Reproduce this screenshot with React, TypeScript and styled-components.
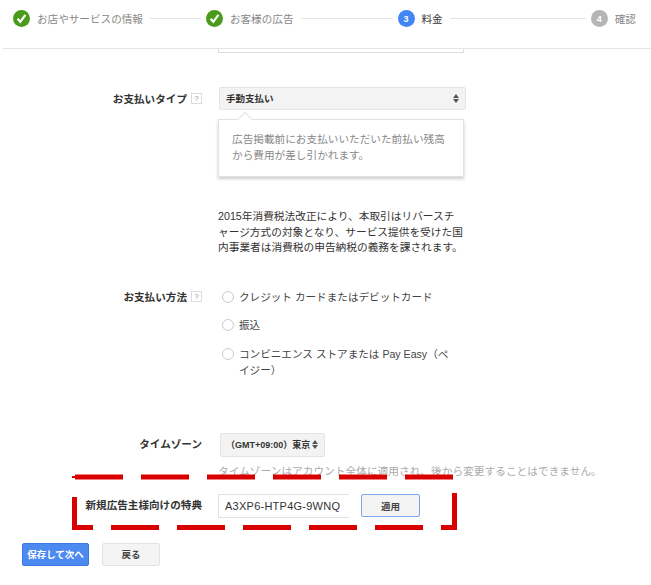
import { createGlobalStyle, styled } from 'styled-components'

const steps = [
  { label: 'お店やサービスの情報', state: 'done', line: 51 },
  { label: 'お客様の広告', state: 'done', line: 92 },
  { label: '料金', state: 'active', line: 136, num: 3 },
  { label: '確認', state: 'todo', line: 0, num: 4 },
]

const payments = ['クレジット カードまたはデビットカード', '振込', 'コンビニエンス ストアまたは Pay Easy（ペイジー）']

const GlobalStyle = createGlobalStyle`
  html, body {
    margin: 0;
    background: #fff;
    overflow: hidden;
  }

  body {
    font-family: "Liberation Sans", "Noto Sans CJK JP", sans-serif;
    color: #333;
  }
`

function App() {
  return (
    <Page>
      <GlobalStyle />
      <Header>
        {steps.map((step) => (
          <Step key={step.label}>
            <StepCircle $state={step.state}>
              {step.state === 'done' ? (
                <svg width="11" height="11" viewBox="0 0 11 11">
                  <path d="M1.6 5.8 4.3 8.8 9.4 1.8" fill="none" stroke="#fff" strokeWidth="2.2" />
                </svg>
              ) : (
                step.num
              )}
            </StepCircle>
            <StepLabel $active={step.state === 'active'}>{step.label}</StepLabel>
            {step.line > 0 && <StepLine $width={step.line} />}
          </Step>
        ))}
      </Header>

      <CutOffBox />

      <TypeRow>
        <Label>
          お支払いタイプ
          <Help>?</Help>
        </Label>
        <div>
          <Select>
            手動支払い
            <Arrows />
          </Select>
          <Bubble>広告掲載前にお支払いいただいた前払い残高から費用が差し引かれます。</Bubble>
        </div>
      </TypeRow>

      <TaxNote>
        2015年消費税法改正により、本取引はリバースチャージ方式の対象となり、サービス提供を受けた国内事業者は消費税の申告納税の義務を課されます。
      </TaxNote>

      <MethodRow>
        <Label>
          お支払い方法
          <Help>?</Help>
        </Label>
        <RadioList>
          {payments.map((payment) => (
            <RadioItem key={payment}>
              <Radio />
              <span>{payment}</span>
            </RadioItem>
          ))}
        </RadioList>
      </MethodRow>

      <ZoneRow>
        <Label>タイムゾーン</Label>
        <div>
          <ZoneSelect>
            （GMT+09:00）東京
            <Arrows />
          </ZoneSelect>
          <Hint>タイムゾーンはアカウント全体に適用され、後から変更することはできません。</Hint>
        </div>
      </ZoneRow>

      <CouponRow>
        <Label>新規広告主様向けの特典</Label>
        <CouponControls>
          <CouponInput>A3XP6-HTP4G-9WNQ</CouponInput>
          <ApplyButton>適用</ApplyButton>
        </CouponControls>
      </CouponRow>

      <Actions>
        <SaveButton>保存して次へ</SaveButton>
        <BackButton>戻る</BackButton>
      </Actions>

      <Annotation width="651" height="585" viewBox="0 0 651 585">
        <path d="M72 477H75" stroke="#d90000" strokeWidth="2" />
        <path d="M75 477H453" stroke="#d90000" strokeWidth="5" strokeDasharray="48 18" />
        <path d="M74.5 497V527.500H93" fill="none" stroke="#d90000" strokeWidth="5" />
        <path d="M111 527.500H423" stroke="#d90000" strokeWidth="5" strokeDasharray="48 18" />
        <path d="M441 527.500H454.500V493" fill="none" stroke="#d90000" strokeWidth="5" />
      </Annotation>
    </Page>
  )
}

const Page = styled.div`
  position: relative;
  width: 651px;
  height: 585px;
  overflow: hidden;
  font-size: 11px;
`

const Header = styled.div`
  display: flex;
  align-items: center;
  box-sizing: border-box;
  height: 49px;
  margin-left: 3px;
  padding: 0 0 11px 10px;
  border-bottom: 1px solid #e5e5e5;
`

const Step = styled.div`
  display: flex;
  align-items: center;
`

const StepCircle = styled.div<{ $state: string }>`
  display: flex;
  align-items: center;
  justify-content: center;
  width: 17px;
  height: 17px;
  margin-right: 7px;
  border-radius: 50%;
  background: ${({ $state }) => ($state === 'done' ? '#4a9a1c' : $state === 'active' ? '#4285f4' : '#b5b5b5')};
  color: #fff;
  font-size: 9px;
  font-weight: bold;
`

const StepLabel = styled.span<{ $active: boolean }>`
  color: ${({ $active }) => ($active ? '#333' : '#888')};
  font-size: 10.600px;
  white-space: nowrap;
`

const StepLine = styled.div<{ $width: number }>`
  width: ${({ $width }) => $width}px;
  height: 1px;
  margin: 0 5px 0 7px;
  background: #e5e5e5;
`

const CutOffBox = styled.div`
  box-sizing: border-box;
  width: 246px;
  height: 4px;
  margin-left: 218px;
  border: 1px solid #ddd;
  border-top: 0;
`

const FormRow = styled.div`
  display: grid;
  grid-template-columns: 202px 1fr;
  column-gap: 16px;
`

const TypeRow = styled(FormRow)`
  margin-top: 34px;
`

const Label = styled.div`
  display: flex;
  align-items: center;
  justify-content: flex-end;
  box-sizing: border-box;
  height: 23px;
  padding-bottom: 1px;
  font-size: 10.600px;
  font-weight: bold;
  color: #333;
  white-space: nowrap;
`

const Help = styled.span`
  display: flex;
  align-items: center;
  justify-content: center;
  box-sizing: border-box;
  width: 11px;
  height: 11px;
  margin-left: 4px;
  border: 1px solid #ddd;
  color: #999;
  font-size: 8px;
  font-weight: normal;
`

const Select = styled.div`
  position: relative;
  display: flex;
  align-items: center;
  box-sizing: border-box;
  width: 247px;
  height: 23px;
  margin-left: 1px;
  padding: 0 0 1px 6px;
  border: 1px solid #e4e4e4;
  border-radius: 2px;
  background: #f3f3f3;
  color: #333;
  font-size: 9.500px;
  font-weight: bold;
`

const Arrows = styled.span`
  position: absolute;
  top: 50%;
  right: 5px;
  width: 7px;
  height: 9px;
  margin-top: -5px;

  &::before,
  &::after {
    content: '';
    position: absolute;
    left: 0;
    border-left: 3.500px solid transparent;
    border-right: 3.500px solid transparent;
  }

  &::before {
    top: 0;
    border-bottom: 4px solid #555;
  }

  &::after {
    bottom: 0;
    border-top: 4px solid #555;
  }
`

const Bubble = styled.div`
  position: relative;
  box-sizing: border-box;
  width: 246px;
  height: 58px;
  margin-top: 9px;
  padding: 12px 13px;
  border: 1px solid #e2e2e2;
  box-shadow: 0 2px 3px rgba(0, 0, 0, 0.2);
  background: #fff;
  color: #888;
  font-size: 10.650px;
  line-height: 15.500px;

  &::before {
    content: '';
    position: absolute;
    top: -6px;
    left: 21px;
    width: 9px;
    height: 9px;
    border-top: 1px solid #e2e2e2;
    border-left: 1px solid #e2e2e2;
    background: #fff;
    transform: rotate(45deg);
  }
`

const TaxNote = styled.p`
  width: 246.500px;
  margin: 32px 0 0 218px;
  color: #333;
  font-size: 10.700px;
  line-height: 15.500px;
`

const MethodRow = styled(FormRow)`
  margin-top: 30px;
`

const RadioList = styled.div`
  display: flex;
  flex-direction: column;
  gap: 12.500px;
  width: 232px;
  padding: 3px 0 0 4px;
`

const RadioItem = styled.div`
  display: flex;
  align-items: flex-start;
  gap: 5px;
  color: #444;
  font-size: 10.600px;
  line-height: 16px;
`

const Radio = styled.span`
  flex: none;
  box-sizing: border-box;
  width: 12px;
  height: 12px;
  margin-top: 2px;
  border: 1px solid #ccc;
  border-radius: 50%;
  background: #fff;
`

const ZoneRow = styled(FormRow)`
  margin-top: 55px;
`

const ZoneSelect = styled(Select)`
  width: 105px;
  height: 24px;
  margin-left: 2px;
  padding-left: 5px;
  white-space: nowrap;
  font-size: 9px;
`

const Hint = styled.div`
  margin-top: 7px;
  color: #aaa;
  font-size: 10.700px;
  line-height: 15px;
  white-space: nowrap;
`

const CouponRow = styled(FormRow)`
  margin-top: 15px;
`

const CouponControls = styled.div`
  display: flex;
  align-items: center;
  gap: 12px;
`

const CouponInput = styled.div`
  display: flex;
  align-items: center;
  box-sizing: border-box;
  width: 131px;
  height: 24px;
  padding-left: 6px;
  border: 1px solid #e2e2e2;
  border-right: 0;
  color: #333;
  font-size: 11px;
  letter-spacing: 0.250px;
`

const Button = styled.button`
  box-sizing: border-box;
  height: 23px;
  padding: 0;
  border-radius: 2px;
  font-family: inherit;
  font-size: 9.500px;
  font-weight: bold;
`

const ApplyButton = styled(Button)`
  width: 59px;
  border: 1px solid #7ba6ee;
  background: #f4f4f4;
  color: #444;
`

const Actions = styled.div`
  display: flex;
  gap: 13px;
  margin: 25px 0 0 22px;
`

const SaveButton = styled(Button)`
  width: 67px;
  border: 1px solid #3b78e7;
  background: #4d8af0;
  color: #fff;
`

const BackButton = styled(Button)`
  width: 58px;
  border: 1px solid #e2e2e2;
  background: #f4f4f4;
  color: #444;
`

const Annotation = styled.svg`
  position: absolute;
  top: 0;
  left: 0;
  pointer-events: none;
`

export default App
